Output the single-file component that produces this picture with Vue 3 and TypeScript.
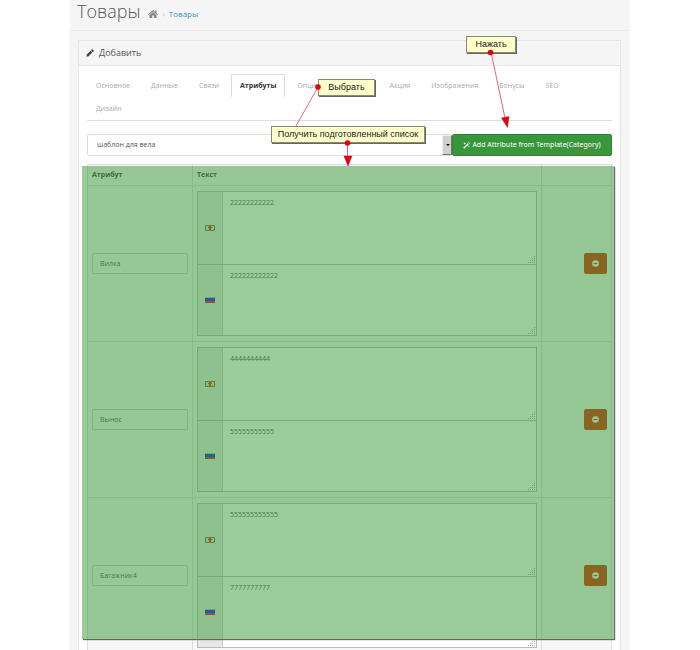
<script setup lang="ts">
import { ref } from 'vue'

interface AttributeRow {
  name: string
  texts: string[]
}

const tabs: string[] = ['Основное', 'Данные', 'Связи', 'Атрибуты', 'Опции', 'Акция', 'Изображения', 'Бонусы', 'SEO', 'Дизайн']
const activeTab = ref('Атрибуты')
const template = ref('шаблон для вела')
const rows = ref<AttributeRow[]>([
  { name: 'Вилка', texts: ['22222222222', '222222222222'] },
  { name: 'Вынос', texts: ['4444444444', '55555555555'] },
  { name: 'Багажник4', texts: ['555555555555', '7777777777'] },
])

function removeRow(index: number): void {
  rows.value.splice(index, 1)
}
</script>

<template>
  <div class="page">
    <header class="page-header">
      <h1>Товары</h1>
      <nav class="crumbs">
        <a href="#" aria-label="Главная">
          <svg class="home" viewBox="0 0 20 16">
            <path d="M10 0 0 8.600l1.300 1.500L10 2.800l8.700 7.300L20 8.600l-3-2.600V1h-2.700v2.700z" />
            <path d="M10 4 3 9.800V16h5.300v-5h3.400v5H17V9.800z" />
          </svg>
        </a>
        <span class="sep">›</span>
        <a href="#">Товары</a>
      </nav>
    </header>

    <main class="panel">
      <h2 class="panel-title">
        <svg viewBox="0 0 16 16">
          <path d="M11.300 1.200a1.600 1.600 0 0 1 2.300 0l1.300 1.300a1.600 1.600 0 0 1 0 2.300l-1.500 1.500-3.600-3.600zM9 3.500l3.600 3.600-7.400 7.400L.8 15.400l.8-4.500z" />
        </svg>
        Добавить
      </h2>
      <div class="panel-body">
        <nav class="tabs">
          <button
            v-for="tab in tabs"
            :key="tab"
            type="button"
            :class="{ active: tab === activeTab, 'group-end': tab === 'Опции' }"
            @click="activeTab = tab"
          >{{ tab }}</button>
        </nav>

        <div class="template-row">
          <div class="select-box">
            <select v-model="template" aria-label="Шаблон">
              <option>шаблон для вела</option>
            </select>
          </div>
          <button type="button" class="add">
            <svg viewBox="0 0 16 16">
              <path d="M.5 13 10.800 2.700l2.500 2.500L3 15.500zM12 1.700 13.500.2l2.500 2.500-1.500 1.500zM4 0l.8 2.200L7 3l-2.200.8L4 6l-.8-2.200L1 3l2.200-.8zM13.500 8l.6 1.500 1.500.6-1.500.6-.6 1.500-.6-1.500-1.500-.6 1.500-.6z" />
            </svg>
            Add Attribute from Template(Category)
          </button>
        </div>

        <table>
          <thead>
            <tr>
              <th class="col-name">Атрибут</th>
              <th>Текст</th>
              <th class="col-action"></th>
            </tr>
          </thead>
          <tbody>
            <tr v-for="(row, index) in rows" :key="index">
              <td><input v-model="row.name" type="text" aria-label="Атрибут" /></td>
              <td>
                <div v-for="(text, lang) in row.texts" :key="lang" class="group">
                  <span class="flag">
                    <svg v-if="lang === 0" viewBox="0 0 10 6">
                      <rect width="10" height="6" fill="#77705c" />
                      <rect x="1" y="1" width="8" height="4" fill="#e8d8b8" />
                      <path d="M4 1h2v1h1v1H6v2H4V3H3V2h1z" fill="#f0200c" />
                    </svg>
                    <svg v-else viewBox="0 0 10 6">
                      <rect width="10" height="1" fill="#a5b5c6" />
                      <rect y="1" width="10" height="3" fill="#1528d4" />
                      <rect y="4" width="10" height="2" fill="#d8201c" />
                    </svg>
                  </span>
                  <textarea v-model="row.texts[lang]" aria-label="Текст"></textarea>
                  <svg class="grip" viewBox="0 0 7 7">
                    <path d="M6 0h1v1H6zM4 2h1v1H4zM6 2h1v1H6zM2 4h1v1H2zM4 4h1v1H4zM6 4h1v1H6zM0 6h1v1H0zM2 6h1v1H2zM4 6h1v1H4zM6 6h1v1H6z" />
                  </svg>
                </div>
              </td>
              <td class="action">
                <button type="button" class="remove" aria-label="Удалить" @click="removeRow(index)">
                  <svg viewBox="0 0 8 8">
                    <circle cx="4" cy="4" r="3.800" fill="#fff" />
                    <rect x="1.800" y="3.300" width="4.400" height="1.400" fill="#e1310f" />
                  </svg>
                </button>
              </td>
            </tr>
          </tbody>
        </table>
      </div>
    </main>

    <div class="highlight"></div>
    <svg class="arrows" width="700" height="650" viewBox="0 0 700 650">
      <path d="M318 87 296 126M491 52l14 66M347.500 143v14" fill="none" stroke="#e06a70" />
      <path d="m501.500 118 7.500-1.500-1.500 11zM344 156h8l-4 10z" fill="#e6000c" stroke="#a8141a" stroke-width=".5" />
    </svg>
    <div class="note note-press">Нажать</div>
    <div class="note note-choose">Выбрать</div>
    <div class="note note-list">Получить подготовленный список</div>
    <svg class="arrows" width="700" height="650" viewBox="0 0 700 650">
      <g fill="#e6000c">
        <circle cx="318" cy="87" r="2.800" />
        <circle cx="490.500" cy="52.500" r="2.800" />
        <circle cx="347.500" cy="143" r="2.800" />
      </g>
    </svg>
  </div>
</template>

<style>
body {
  background: #fff;
}
</style>

<style scoped>
.page {
  position: relative;
  box-sizing: border-box;
  height: 100vh;
  overflow: hidden;
  padding: 0 10%;
  font: 7px/10px "Open Sans", sans-serif;
  color: #555;
}
.page * {
  box-sizing: border-box;
}
.page svg {
  display: block;
}
button,
input,
select,
textarea {
  margin: 0;
  font: inherit;
  color: inherit;
}
a {
  color: #4592b8;
  text-decoration: none;
}
.page-header {
  display: flex;
  align-items: center;
  gap: 8px;
  height: 31px;
  padding: 0 7px 8px;
  background: #f5f5f5;
  border-bottom: 1px solid #ececec;
}
h1 {
  margin: 0;
  font-size: 18px;
  line-height: 22px;
  font-weight: 300;
  color: #555;
}
.crumbs {
  display: flex;
  align-items: center;
  gap: 4px;
  padding-top: 6px;
  font-size: 8px;
}
.home {
  width: 10px;
  height: 8px;
  fill: #888;
}
.sep {
  color: #bbb;
}
.panel {
  border: 1px solid #e6e6e6;
  outline: 9px solid #f5f5f5;
  margin: 9px 9px 0 8px;
  background: #fff;
}
.panel-title {
  display: flex;
  align-items: center;
  gap: 5px;
  height: 25px;
  margin: 0;
  padding: 0 7px;
  background: #f5f5f5;
  border-bottom: 1px solid #e8e8e8;
  font-size: 9px;
  font-weight: 400;
  color: #555;
}
.panel-title svg {
  width: 8px;
  height: 8px;
  fill: #444;
}
.panel-body {
  padding: 8px;
}
.tabs {
  display: flex;
  flex-wrap: wrap;
  column-gap: 3px;
  padding-right: 8px;
  border-bottom: 1px solid #ddd;
}
.tabs button {
  height: 23px;
  padding: 0 8px;
  border: 1px solid transparent;
  border-bottom: 0;
  background: none;
  color: #aaa;
}
.tabs .active {
  border-color: #ddd;
  background: #fff;
  color: #333;
  font-weight: 700;
}
.tabs .group-end {
  margin-right: 48px;
}
.template-row {
  display: flex;
  margin: 13px 0 8px;
}
.select-box {
  position: relative;
  flex: 1;
}
.select-box select {
  display: block;
  width: 100%;
  height: 22px;
  padding: 0 9px;
  appearance: none;
  border: 1px solid #ddd;
  border-radius: 2px;
  background: #fff;
}
.select-box::before {
  content: "";
  position: absolute;
  top: 1px;
  right: 0;
  bottom: 1px;
  width: 8px;
  border: 1px solid;
  border-color: #eee #777 #777 #eee;
  background: #d2d0cb;
  pointer-events: none;
}
.select-box::after {
  content: "";
  position: absolute;
  top: 10px;
  right: 2px;
  border: 2px solid transparent;
  border-top-color: #000;
  pointer-events: none;
}
.add {
  display: flex;
  align-items: center;
  justify-content: center;
  gap: 2px;
  width: 160px;
  height: 22px;
  padding: 0;
  border: 1px solid #2f852f;
  border-radius: 2px;
  background: #3a963c;
  font-family: "Noto Sans", sans-serif;
  color: #fff;
}
.add svg {
  width: 7px;
  height: 7px;
  fill: #fff;
}
table {
  width: 100%;
  border-collapse: collapse;
  table-layout: fixed;
  background: #f7f7f7;
}
th,
td {
  border: 1px solid #ddd;
  padding: 5px 4px;
  text-align: left;
}
th {
  height: 21px;
  padding: 0 4px;
  font-weight: 700;
  color: #444;
}
.col-name {
  width: 105px;
}
.col-action {
  width: 70px;
}
td input {
  display: block;
  width: 100%;
  height: 21px;
  padding: 0 7px;
  border: 1px solid #ccc;
  border-radius: 1px;
  background: transparent;
}
.group {
  position: relative;
  display: flex;
  height: 73px;
  border: 1px solid #bbb;
  border-bottom-width: 0;
  background: #fff;
}
.group:last-child {
  height: 72px;
  border-bottom-width: 1px;
}
.flag {
  display: flex;
  align-items: center;
  justify-content: center;
  width: 25px;
  border-right: 1px solid #ccc;
  background: #e8e8e8;
}
.flag svg {
  width: 10px;
  height: 6px;
}
textarea {
  flex: 1;
  padding: 6px 7px;
  border: 0;
  background: none;
  resize: none;
}
.grip {
  position: absolute;
  right: 1px;
  bottom: 1px;
  width: 7px;
  height: 7px;
  fill: #aaa;
}
.action {
  text-align: right;
}
.remove {
  display: inline-flex;
  align-items: center;
  justify-content: center;
  width: 23px;
  height: 21px;
  padding: 0;
  border: 0;
  border-radius: 2px;
  background: #e1310f;
  vertical-align: middle;
}
.remove svg {
  width: 7px;
  height: 7px;
}
.highlight {
  position: absolute;
  top: 166px;
  left: 82px;
  width: 532px;
  height: 473px;
  background: rgba(51, 153, 51, 0.5);
  box-shadow: 1px 1px 1px #666;
  pointer-events: none;
}
.arrows {
  position: absolute;
  top: 0;
  left: 0;
  pointer-events: none;
}
.note {
  position: absolute;
  height: 17px;
  border: 1px solid #8a8a70;
  background: #ffffcc;
  box-shadow: 1px 1px 0 #666;
  font: 9px/15px "Liberation Sans", sans-serif;
  color: #222;
  text-align: center;
  white-space: nowrap;
}
.note-press {
  top: 36px;
  left: 466px;
  width: 50px;
}
.note-choose {
  top: 79px;
  left: 318px;
  width: 57px;
}
.note-list {
  top: 126px;
  left: 271px;
  width: 154px;
}
</style>
